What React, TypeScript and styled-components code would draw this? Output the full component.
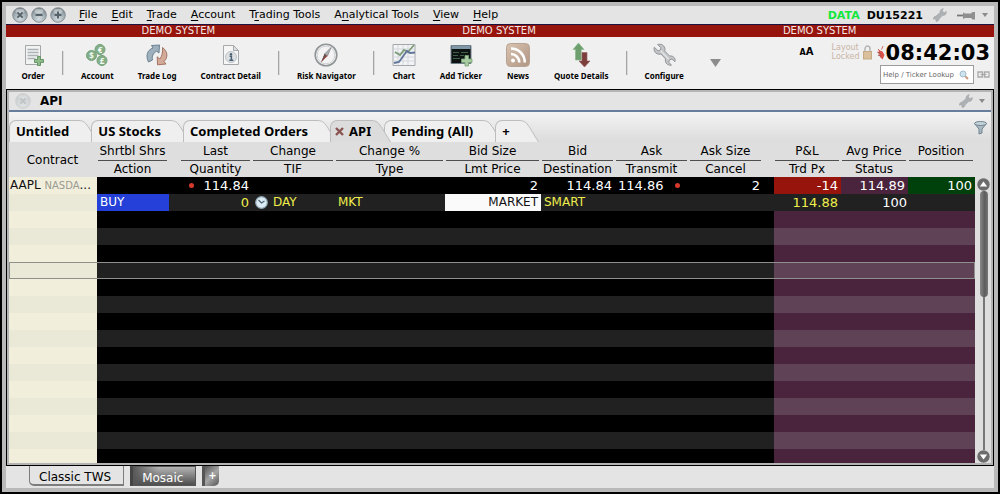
import React from "react";
import styled, { createGlobalStyle, css } from "styled-components";

const sans = '"DejaVu Sans", Verdana, sans-serif';
const humanist = '"Noto Sans", Tahoma, sans-serif';

const GlobalStyle = createGlobalStyle`
  * { box-sizing: border-box; }
  body { margin: 0; background: #000; font-family: ${sans}; color: #000; }
  button { margin: 0; padding: 0; border: 0; background: none; color: inherit; font: inherit; }
  svg { display: block; flex: none; }
`;

const Frame = styled.div`
  display: flex;
  flex-direction: column;
  height: 100vh;
  padding: 4px;
  border: 2px solid #000;
  background: #b9b9b9;
`;

const MenuBar = styled.header`
  display: flex;
  align-items: center;
  height: 19px;
  flex: none;
  padding: 0 6px;
  background: #e4e4e4;
  border-bottom: 1px solid #1c1440;
`;

const WindowButtons = styled.div`
  display: flex;
  gap: 3px;
  margin-right: 13px;
`;

const Menus = styled.nav`
  display: flex;
  gap: 14px;
  flex: 1;
`;

const MenuButton = styled.button`
  font-size: 11px;
  line-height: 16px;
  white-space: nowrap;
`;

const Mnemonic = styled.span`
  text-decoration: underline;
  text-underline-offset: 2px;
`;

const AccountStatus = styled.div`
  display: flex;
  align-items: center;
  gap: 7px;
  font-size: 11px;
  font-weight: bold;
`;

const DataFlag = styled.span`
  color: #12e83c;
`;

const StatusTools = styled.div`
  display: flex;
  align-items: center;
  gap: 6px;
  margin-left: 3px;
`;

const DemoBanner = styled.div`
  display: grid;
  grid-template-columns: repeat(3, 1fr);
  flex: none;
  padding: 0 14px 0 12px;
  background: #96140c;
  color: #f4e8e6;
  font-size: 10px;
  line-height: 12px;
  text-align: center;
`;

const Toolbar = styled.div`
  display: flex;
  height: 52px;
  flex: none;
  padding: 0 4px 0 3px;
  background: #f0f0f0;
`;

const ToolButton = styled.button`
  display: flex;
  flex-direction: column;
  align-items: center;
  gap: 3px;
  padding: 6px 12px 0;
  font-family: ${humanist};
  font-size: 8px;
  font-weight: bold;
  line-height: 12px;
  white-space: nowrap;
`;

const ToolSeparator = styled.span`
  width: 2px;
  height: 24px;
  margin: 14px 5px 0;
  border-right: 1px solid #dadada;
  background: #a4a4a4;
`;

const MoreButton = styled.button`
  padding: 0 14px;
`;

const ToolbarEnd = styled.div`
  display: flex;
  align-items: flex-start;
  margin-left: auto;
`;

const FontSizeButton = styled.button`
  margin: 9px 18px 0 0;
  font-size: 10px;
  font-weight: bold;
  line-height: 12px;
`;

const SmallLetter = styled.span`
  font-size: 8px;
`;

const LockButton = styled.button`
  display: flex;
  align-items: center;
  gap: 3px;
  margin: 6px 5px 0 0;
  color: #c9b5a5;
  font-size: 8px;
  line-height: 9px;
  text-align: left;
`;

const ClockColumn = styled.div`
  display: flex;
  flex-direction: column;
  align-items: flex-end;
`;

const ClockRow = styled.div`
  display: flex;
  align-items: center;
  gap: 1px;
  height: 28px;
  padding-top: 3px;
`;

const Clock = styled.time`
  font-size: 21px;
  font-weight: bold;
  line-height: 24px;
`;

const SearchRow = styled.div`
  display: flex;
  align-items: center;
  gap: 3px;
`;

const SearchBox = styled.label`
  display: flex;
  align-items: center;
  width: 94px;
  height: 19px;
  padding-right: 4px;
  background: #fff;
  border: 1px solid #9c9c9c;
`;

const SearchInput = styled.input`
  flex: 1;
  min-width: 0;
  padding: 0 0 0 2px;
  border: 0;
  outline: 0;
  background: none;
  font-family: ${sans};
  font-size: 7px;
  &::placeholder { color: #666; opacity: 1; }
`;

const Panel = styled.section`
  display: flex;
  flex-direction: column;
  flex: 1;
  min-height: 0;
  padding: 2px;
  border: 1px solid #000;
  background: #b4b4b4;
`;

const PanelTitle = styled.div`
  display: flex;
  align-items: center;
  height: 20px;
  flex: none;
  padding: 0 6px;
  background: #e4e4e4;
  border-bottom: 2px solid #667d9c;
`;

const PanelName = styled.h1`
  flex: 1;
  margin: 0 0 0 9px;
  font-size: 12px;
  line-height: 16px;
`;

const TabStrip = styled.div`
  display: flex;
  align-items: flex-end;
  justify-content: space-between;
  height: 30px;
  flex: none;
  background: linear-gradient(#f3f3f3, #dcdcdc);
`;

const TabList = styled.div`
  display: flex;
`;

const Tab = styled.button<{ $active?: boolean }>`
  position: relative;
  display: flex;
  margin-right: -7px;
  z-index: ${(p) => (p.$active ? 1 : 0)};
  color: ${(p) => (p.$active ? "#dcdcdc" : "#efefef")};
`;

const TabBody = styled.span<{ $tight?: boolean }>`
  display: flex;
  align-items: center;
  gap: 5px;
  height: 22px;
  padding: 0 ${(p) => (p.$tight ? 0 : 9)}px 1px ${(p) => (p.$tight ? 4 : 6)}px;
  background: currentColor;
  border: 1px solid #bdbdbd;
  border-width: 1px 0 0 1px;
  border-top-left-radius: 7px;
`;

const TabText = styled.span`
  color: #000;
  font-family: ${humanist};
  font-size: 13px;
  font-weight: bold;
  line-height: 18px;
  white-space: nowrap;
`;

const FilterButton = styled.button`
  align-self: center;
  padding: 2px 4px 0 0;
`;

const GridArea = styled.div`
  display: flex;
  flex: 1;
  min-height: 0;
  overflow: hidden;
  background: #dedede;
`;

const GridClip = styled.div`
  flex: 1;
  min-width: 0;
  overflow: hidden;
`;

const Grid = styled.table`
  width: 100%;
  table-layout: fixed;
  border-collapse: collapse;
`;

const HeadCell = styled.th`
  height: 35px;
  padding: 1px 2px 0 1px;
  font-size: 12px;
  font-weight: normal;
  line-height: 17px;
  white-space: nowrap;
`;

const HeadLine = styled.span<{ $ruled?: boolean }>`
  display: block;
  height: 16px;
  ${(p) => p.$ruled && css`
    height: 18px;
    border-bottom: 1px solid #4e4e4e;
  `}
`;

const Row = styled.tr<{ $focused?: boolean }>`
  height: 17px;
  ${(p) => p.$focused && css`
    outline: 1px solid #8f8f8b;
    outline-offset: -1px;
  `}
`;

type Zone = "contract" | "plain" | "account";
const zoneColors: Record<Zone, [string, string]> = {
  contract: ["#f1efdc", "#eae8d6"],
  plain: ["#000000", "#212121"],
  account: ["#4a243c", "#604256"],
};

const Cell = styled.td<{
  $zone: Zone;
  $odd: boolean;
  $fill?: string;
  $ink?: string;
  $align?: string;
  $flush?: boolean;
  $numeric?: boolean;
}>`
  height: 17px;
  padding: 0 ${(p) => (p.$flush ? 1 : 3)}px;
  background: ${(p) => p.$fill ?? zoneColors[p.$zone][p.$odd ? 1 : 0]};
  color: ${(p) => p.$ink ?? "#fff"};
  font-size: ${(p) => (p.$numeric ? 13 : 12)}px;
  line-height: 17px;
  text-align: ${(p) => p.$align ?? "left"};
  white-space: nowrap;
  overflow: hidden;
`;

const CellContent = styled.span`
  display: flex;
  align-items: center;
  justify-content: space-between;
`;

const WithIcon = styled.span`
  display: flex;
  align-items: center;
  gap: 5px;
`;

const Exchange = styled.span`
  color: #9b9a90;
  font-size: 10px;
  line-height: 12px;
`;

const TickDot = styled.span`
  width: 5px;
  height: 5px;
  margin: 0 6px;
  border-radius: 50%;
  background: #d63a2c;
`;

const ScrollBar = styled.div`
  display: flex;
  flex-direction: column;
  align-items: center;
  width: 16px;
  flex: none;
  padding: 36px 0 0 1px;
`;

const ScrollTrack = styled.div`
  flex: 1;
  width: 2px;
  display: flex;
  justify-content: center;
  background: #777;
`;

const ScrollThumb = styled.div`
  width: 8px;
  height: 41%;
  flex: none;
  border-radius: 4px;
  background: linear-gradient(90deg, #888, #5c5c5c 60%, #777);
`;

const BottomBar = styled.footer`
  display: flex;
  align-items: flex-start;
  gap: 6px;
  height: 22px;
  flex: none;
  padding-left: 23px;
  background: #e4e4e4;
`;

const LayoutTab = styled.button<{ $active?: boolean }>`
  height: 20px;
  padding: 2px 12px 0 9px;
  border: 1px solid #7c7c7c;
  border-top: 0;
  border-bottom-width: 2px;
  border-radius: 0 0 0 5px;
  font-size: 12px;
  line-height: 18px;
  ${(p) => !p.$active && css`
    border: 1px solid #555;
    border-left: 3px solid #444;
    border-radius: 0;
    background: linear-gradient(100deg, #555 0%, transparent 40%), linear-gradient(#b5b5b5, #4c4c4c);
    color: #fff;
  `}
`;

const AddLayoutTab = styled.button`
  width: 17px;
  height: 20px;
  border-left: 3px solid #555;
  border-radius: 0 0 5px 0;
  background: linear-gradient(135deg, #555, #a5a5a5 50%, #555);
  color: #fff;
  font-size: 10px;
  font-weight: bold;
  line-height: 18px;
`;

/* ---------- drawings ---------- */

const RoundButton = styled.button`
  display: block;
  border-radius: 50%;
`;

function WindowIcon({ kind, faded }: { kind: "x" | "-" | "+"; faded?: boolean }) {
  const id = "orb" + kind + (faded ? "f" : "");
  return (
    <svg width="16" height="16" viewBox="0 0 16 16" opacity={faded ? 0.25 : 1}>
      <defs>
        <radialGradient id={id} cx=".5" cy=".75" r=".7">
          <stop offset="0" stopColor="#d4dde1" />
          <stop offset=".7" stopColor="#9ba8ae" />
          <stop offset="1" stopColor="#6c787e" />
        </radialGradient>
      </defs>
      <circle cx="8" cy="8" r="7.3" fill={`url(#${id})`} stroke="#8a9297" strokeWidth="1" />
      <ellipse cx="8" cy="4" rx="4.6" ry="2.2" fill="#fff" opacity=".4" />
      <g stroke="#56636a" strokeWidth="2">
        {kind === "x" ? <path d="M5.4 5.4l5.2 5.2M10.6 5.4l-5.2 5.2" /> : <path d="M4.5 8h7" />}
        {kind === "+" && <path d="M8 4.5v7" />}
      </g>
    </svg>
  );
}

function Wrench() {
  return (
    <svg width="24" height="24" viewBox="0 0 24 24">
      <path
        d="M2.3 4.2L6 7.8l2.3-.6.6-2.4L5.6 1.5C8.8.6 12 2 12.8 5c.3 1.2.2 2-.1 3l4.8 5c1.8-.3 3.6.2 4.7 1.6 1 1.2 1.2 2.7.8 4.1L20 16l-2.6.8-.6 2.5 2.7 2.9c-2.9.6-5.7-1.2-6.1-4.1-.1-.9 0-1.5.2-2.1L9 11c-2.7.8-5.6-.4-6.6-3-.4-1.3-.5-2.6-.1-3.8z"
        fill="#c3c6c8"
        stroke="#93979a"
        strokeWidth="1"
      />
      <path d="M8.500 7.500l8.500 9" stroke="#e0e2e3" strokeWidth="1.600" />
    </svg>
  );
}

function SmallWrench() {
  return (
    <svg width="14" height="14" viewBox="0 0 14 14">
      <path
        d="M10.300.6L9.500 2.500l.4 1.600 1.600.3 1.900-1c.2 2-.8 3.800-2.600 4L9.700 7.600 6.100 11c-.2 1.700-1.500 2.700-3.100 2.500l-.1-1.900-1.200-.7-1.300.3c-.2-1.700.9-2.900 2.500-3.100l4-3.300C6.700 2.600 8.300.7 10.300.6z"
        fill="#adb1b3"
        stroke="#a0a4a6"
        strokeWidth=".5"
      />
    </svg>
  );
}

function Pin() {
  return (
    <svg width="19" height="11" viewBox="0 0 19 11">
      <path d="M0 5.500h7" stroke="#777" strokeWidth="1.800" />
      <path d="M6 2.500l2 1h6l1.500-1.500h2.500v7.500h-2.500L14 8H8L6 9z" fill="#8f8f8f" />
    </svg>
  );
}

function Caret({ w, h, color = "#8a8a8a" }: { w: number; h: number; color?: string }) {
  return (
    <svg width={w} height={h} viewBox="0 0 10 8" preserveAspectRatio="none">
      <path d="M0 0h10L5 8z" fill={color} />
    </svg>
  );
}

function OrderIcon() {
  return (
    <svg width="24" height="24" viewBox="0 0 24 24">
      <path d="M4.500 2.500h15v19h-15z" fill="#f1f2f2" stroke="#a3a7aa" />
      <path d="M6.500 6.500h11M6.500 9.500h11M6.500 12.500h11M6.500 15.500h8" stroke="#adb2b6" strokeWidth="1.500" />
      <path d="M16.500 13.500h3v3h3v3h-3v3h-3v-3h-3v-3h3z" fill="#8fbb8a" stroke="#5f9060" strokeWidth=".9" />
    </svg>
  );
}

function AccountIcon() {
  const coins: [number, number, string][] = [[15, 6.5, "€"], [6.5, 12.5, "$"], [17, 17.5, "£"]];
  return (
    <svg width="24" height="24" viewBox="0 0 24 24">
      {coins.map(([x, y, sign]) => (
        <g key={sign}>
          <circle cx={x} cy={y} r="5" fill="#83ae86" stroke="#74a07a" />
          <text x={x} y={y + 3} fill="#f2f8f2" fontSize="8" fontWeight="bold" textAnchor="middle">{sign}</text>
        </g>
      ))}
    </svg>
  );
}

function TradeLogIcon() {
  return (
    <svg width="24" height="24" viewBox="0 0 24 24">
      <path d="M3.500 19C.5 13 2 7 8 5L6.500 2.500l8-.5-.5 8-2.300-1.800C8 10 6.800 13.500 7.500 17z" fill="#9db0bc" stroke="#61788a" strokeWidth=".9" />
      <path d="M17.500 4.500c5 3.500 6 9.500 1.500 14l2 2.500-8.500.8-.3-8 2.600 2.200C17 13.500 18 9 17.500 4.500z" fill="#d3ab98" stroke="#9b6a58" strokeWidth=".9" />
    </svg>
  );
}

function ContractIcon() {
  return (
    <svg width="24" height="24" viewBox="0 0 24 24">
      <path d="M4.500 2.500h10l5 5v14h-15z" fill="#f6f6f6" stroke="#a5a9ac" />
      <path d="M14.500 2.500v5h5z" fill="#dde0e2" stroke="#a5a9ac" />
      <circle cx="12" cy="14" r="5.500" fill="#dde1e4" stroke="#bcc2c6" />
      <circle cx="12" cy="11.200" r="1.200" fill="#4b5f70" />
      <path d="M10.600 13.200H12.400v4M10.300 17.300h4" stroke="#4b5f70" strokeWidth="1.500" fill="none" />
    </svg>
  );
}

function CompassIcon() {
  return (
    <svg width="24" height="24" viewBox="0 0 24 24">
      <circle cx="12" cy="12" r="10.800" fill="#f3f3f3" stroke="#8f9496" strokeWidth="1.600" />
      <circle cx="12" cy="12" r="8.800" fill="none" stroke="#d0d2d3" />
      <path d="M17 4.500L13.500 13l-3-2z" fill="#a9aeb2" stroke="#777" strokeWidth=".6" />
      <path d="M7 19.500l6.500-6.500-3-2z" fill="#9c4440" />
      <path d="M7 19.500l3.500-8.500 1.500 1z" fill="#555" />
    </svg>
  );
}

function ChartIcon() {
  return (
    <svg width="24" height="24" viewBox="0 0 24 24">
      <path d="M1 1.500h22v21H1z" fill="#f2f3f5" stroke="#a4a7aa" />
      <path d="M1 6h22M1 10h22M1 14h22M1 18h22M6 2v20M11 2v20M16 2v20" stroke="#cdd0d6" strokeWidth=".8" />
      <path d="M3 9l5 3 4-5 4 2 6-7" stroke="#7d9c78" strokeWidth="1.800" fill="none" />
      <path d="M2 20l5-1 5-7 3-4 3 2 5-.5" stroke="#61749a" strokeWidth="1.800" fill="none" />
    </svg>
  );
}

function TickerIcon() {
  return (
    <svg width="24" height="24" viewBox="0 0 24 24">
      <path d="M2 2.500h20v18H2z" fill="#0d1412" stroke="#70808a" />
      <path d="M2.500 3h19v3h-19z" fill="#8196a6" />
      <path d="M4 9.500h6M12 9.500h7M4 12.500h5M11 12.500h4M4 15.500h7" stroke="#3f5f4c" strokeWidth="1.200" />
      <path d="M16 12.500h3.500v3.500h3.500v3.500h-3.500V23H16v-3.500h-3.500V16H16z" fill="#a9cba2" stroke="#7aa376" strokeWidth=".8" />
    </svg>
  );
}

function NewsIcon() {
  return (
    <svg width="24" height="24" viewBox="0 0 24 24">
      <defs>
        <linearGradient id="news" x1="0" y1="0" x2="1" y2="1">
          <stop offset="0" stopColor="#d9c3b1" />
          <stop offset="1" stopColor="#b09684" />
        </linearGradient>
      </defs>
      <rect x=".5" y=".5" width="23" height="23" rx="4" fill="url(#news)" stroke="#b8a393" />
      <circle cx="7" cy="17.500" r="2" fill="#fff" />
      <path d="M5 11c4.500 0 8.300 3.800 8.300 8.500M5 5.500c7.500 0 13.800 6 13.800 14" fill="none" stroke="#fff" strokeWidth="2.600" />
    </svg>
  );
}

function QuoteIcon() {
  return (
    <svg width="24" height="24" viewBox="0 0 24 24">
      <path d="M9.500 0L15 6.500h-2.800V17H6.500V6.500H4z" fill="#6da06e" stroke="#86b487" strokeWidth=".6" />
      <path d="M13 9.500h5V18h3l-5.500 6-5.500-6h3z" fill="#7c3f3c" stroke="#955d5a" strokeWidth=".6" />
    </svg>
  );
}

function LockIcon() {
  return (
    <svg width="9" height="15" viewBox="0 0 9 15">
      <path d="M2 7V4a2.500 3 0 0 1 5 0v3" fill="none" stroke="#b5b5b5" strokeWidth="1.500" />
      <rect x=".5" y="6.500" width="8" height="7.500" fill="#d9bf9c" stroke="#c4a985" />
    </svg>
  );
}

function ConnectionIcon() {
  return (
    <svg width="8" height="14" viewBox="0 0 8 14">
      <path d="M6 0L4.500 3.500M1 3l2 2" stroke="#d06a60" />
      <path d="M1.500 4l4 1.500L7.500 9 5.500 13.500 3 11z" fill="#d8524a" />
      <path d="M.5 6l3 2M1 9l3 1" stroke="#b05048" strokeWidth="1.200" />
    </svg>
  );
}

function Magnifier() {
  return (
    <svg width="10" height="10" viewBox="0 0 10 10">
      <path d="M6 6l3 3" stroke="#c89a7a" strokeWidth="1.800" />
      <circle cx="4" cy="4" r="3" fill="#cfe3ee" stroke="#a3bccb" />
    </svg>
  );
}

function LinkIcon() {
  return (
    <svg width="13" height="7" viewBox="0 0 13 7">
      <path d="M1 1h4.500v5H1zM7.500 1H12v5H7.500z" fill="none" stroke="#aaa" strokeWidth="1.300" />
      <path d="M3.500 3.500h6" stroke="#aaa" strokeWidth="1.300" />
    </svg>
  );
}

function TabCap() {
  return (
    <svg width="20" height="22" viewBox="0 0 20 22">
      <path d="M0 .5C7 .5 8 4 11 8L19.500 22H0z" fill="currentColor" />
      <path d="M0 .5C7 .5 8 4 11 8L19.500 22" fill="none" stroke="#bdbdbd" />
    </svg>
  );
}

function CloseMark() {
  return (
    <svg width="9" height="9" viewBox="0 0 9 9">
      <path d="M1 1l7 7M8 1L1 8" stroke="#8a5450" strokeWidth="2.400" />
    </svg>
  );
}

function FilterIcon() {
  return (
    <svg width="13" height="14" viewBox="0 0 13 14">
      <path d="M.5 2.500L5 8v5l3-1V8l4.500-5.500z" fill="#a9bac4" stroke="#70828d" />
      <ellipse cx="6.500" cy="2.500" rx="6" ry="2" fill="#c3d2da" stroke="#70828d" />
    </svg>
  );
}

function ClockFace() {
  return (
    <svg width="13" height="13" viewBox="0 0 13 13">
      <circle cx="6.500" cy="6.500" r="5.800" fill="#dcecf4" stroke="#8fa6b3" strokeWidth="1.200" />
      <path d="M3.500 4l3 3 3-2" fill="none" stroke="#4c6474" strokeWidth="1.300" />
    </svg>
  );
}

function ScrollArrow({ up }: { up?: boolean }) {
  return (
    <svg width="13" height="13" viewBox="0 0 13 13">
      <circle cx="6.500" cy="6.500" r="6.200" fill="#6c6c6c" />
      <path d={up ? "M2.800 8.500L6.500 3.500l3.700 5z" : "M2.800 4.500L6.500 9.500l3.700-5z"} fill="#fff" />
    </svg>
  );
}

/* ---------- data ---------- */

const menus: [string, string, string][] = [
  ["", "F", "ile"],
  ["", "E", "dit"],
  ["", "T", "rade"],
  ["", "A", "ccount"],
  ["T", "r", "ading Tools"],
  ["A", "n", "alytical Tools"],
  ["", "V", "iew"],
  ["", "H", "elp"],
];

const tools: ([string, React.ReactNode] | null)[] = [
  ["Order", <OrderIcon />],
  null,
  ["Account", <AccountIcon />],
  ["Trade Log", <TradeLogIcon />],
  ["Contract Detail", <ContractIcon />],
  null,
  ["Risk Navigator", <CompassIcon />],
  null,
  ["Chart", <ChartIcon />],
  ["Add Ticker", <TickerIcon />],
  ["News", <NewsIcon />],
  ["Quote Details", <QuoteIcon />],
  null,
  ["Configure", <Wrench />],
];

const tabs = ["Untitled", "US Stocks", "Completed Orders", "API", "Pending (All)", "+"];

interface Column {
  width: number;
  zone: Zone;
  head?: [string, string];
}

const columns: Column[] = [
  { width: 88, zone: "contract" },
  { width: 72, zone: "plain", head: ["Shrtbl Shrs", "Action"] },
  { width: 11, zone: "plain" },
  { width: 72, zone: "plain", head: ["Last", "Quantity"] },
  { width: 83, zone: "plain", head: ["Change", "TIF"] },
  { width: 110, zone: "plain", head: ["Change %", "Type"] },
  { width: 96, zone: "plain", head: ["Bid Size", "Lmt Price"] },
  { width: 74, zone: "plain", head: ["Bid", "Destination"] },
  { width: 74, zone: "plain", head: ["Ask", "Transmit"] },
  { width: 74, zone: "plain", head: ["Ask Size", "Cancel"] },
  { width: 11, zone: "plain" },
  { width: 67, zone: "account", head: ["P&L", "Trd Px"] },
  { width: 67, zone: "account", head: ["Avg Price", "Status"] },
  { width: 67, zone: "account", head: ["Position", ""] },
];

interface CellData {
  value: React.ReactNode;
  fill?: string;
  ink?: string;
  align?: string;
  flush?: boolean;
  numeric?: boolean;
}

const yellow = "#f0ee4c";
const num = (value: React.ReactNode, more: Partial<CellData> = {}): CellData => ({
  value,
  align: "right",
  numeric: true,
  ...more,
});

const rows: Record<number, CellData>[] = [
  {
    0: { value: <>AAPL <Exchange>NASDA</Exchange>...</>, ink: "#111", flush: true },
    3: num(<CellContent><TickDot />114.84</CellContent>),
    6: num("2"),
    7: num("114.84"),
    8: num(<CellContent>114.86<TickDot /></CellContent>),
    9: num("2"),
    11: num("-14", { fill: "#96140c" }),
    12: num("114.89"),
    13: num("100", { fill: "#00400a" }),
  },
  {
    1: { value: "BUY", fill: "#2440d8" },
    3: num("0", { ink: yellow }),
    4: { value: <WithIcon><ClockFace />DAY</WithIcon>, ink: yellow },
    5: { value: "MKT", ink: yellow },
    6: { value: "MARKET", fill: "#fafafa", ink: "#111", align: "right" },
    7: { value: "SMART", ink: yellow },
    11: num("114.88", { fill: "#212121", ink: yellow }),
    12: num("100", { fill: "#212121", flush: true }),
    13: { value: "", fill: "#212121" },
  },
  ...Array.from({ length: 15 }, () => ({})),
];

const focusedRow = 5;

export default function App() {
  return (
    <Frame>
      <GlobalStyle />
      <MenuBar>
        <WindowButtons>
          <RoundButton aria-label="Close"><WindowIcon kind="x" /></RoundButton>
          <RoundButton aria-label="Minimize"><WindowIcon kind="-" /></RoundButton>
          <RoundButton aria-label="Maximize"><WindowIcon kind="+" /></RoundButton>
        </WindowButtons>
        <Menus>
          {menus.map(([before, key, after]) => (
            <MenuButton key={key + after}>{before}<Mnemonic>{key}</Mnemonic>{after}</MenuButton>
          ))}
        </Menus>
        <AccountStatus>
          <DataFlag>DATA</DataFlag>
          <span>DU15221</span>
          <StatusTools>
            <button aria-label="Settings"><SmallWrench /></button>
          </StatusTools>
          <StatusTools>
            <button aria-label="Pin window"><Pin /></button>
            <button aria-label="Pin options"><Caret w={6} h={4} /></button>
          </StatusTools>
        </AccountStatus>
      </MenuBar>

      <DemoBanner>
        <span>DEMO SYSTEM</span>
        <span>DEMO SYSTEM</span>
        <span>DEMO SYSTEM</span>
      </DemoBanner>

      <Toolbar>
        {tools.map((tool, i) =>
          tool ? (
            <ToolButton key={i}>{tool[1]}<span>{tool[0]}</span></ToolButton>
          ) : (
            <ToolSeparator key={i} />
          )
        )}
        <MoreButton aria-label="More tools"><Caret w={11} h={8} color="#8c8c8c" /></MoreButton>
        <ToolbarEnd>
          <FontSizeButton aria-label="Font size"><SmallLetter>A</SmallLetter>A</FontSizeButton>
          <LockButton><span>Layout<br />Locked</span><LockIcon /></LockButton>
          <ClockColumn>
            <ClockRow><ConnectionIcon /><Clock>08:42:03</Clock></ClockRow>
            <SearchRow>
              <SearchBox>
                <SearchInput aria-label="Help / Ticker Lookup" placeholder="Help / Ticker Lookup" />
                <Magnifier />
              </SearchBox>
              <LinkIcon />
            </SearchRow>
          </ClockColumn>
        </ToolbarEnd>
      </Toolbar>

      <Panel>
        <PanelTitle>
          <RoundButton aria-label="Close panel"><WindowIcon kind="x" faded /></RoundButton>
          <PanelName>API</PanelName>
          <StatusTools>
            <button aria-label="Panel settings"><SmallWrench /></button>
            <button aria-label="Panel options"><Caret w={6} h={4} /></button>
          </StatusTools>
        </PanelTitle>

        <TabStrip>
          <TabList role="tablist">
            {tabs.map((name) => (
              <Tab key={name} role="tab" $active={name === "API"} aria-selected={name === "API"}>
                <TabBody $tight={name === "API"}>
                  {name === "API" && <CloseMark />}
                  <TabText>{name}</TabText>
                </TabBody>
                <TabCap />
              </Tab>
            ))}
          </TabList>
          <FilterButton aria-label="Filter"><FilterIcon /></FilterButton>
        </TabStrip>

        <GridArea>
          <GridClip>
            <Grid>
              <colgroup>
                {columns.map((c, i) => <col key={i} width={c.width} />)}
              </colgroup>
              <thead>
                <tr>
                  {columns.map((c, i) => (
                    <HeadCell key={i} scope="col">
                      {i === 0 ? "Contract" : c.head && (
                        <>
                          <HeadLine $ruled>{c.head[0]}</HeadLine>
                          <HeadLine>{c.head[1]}</HeadLine>
                        </>
                      )}
                    </HeadCell>
                  ))}
                </tr>
              </thead>
              <tbody>
                {rows.map((row, r) => (
                  <Row key={r} $focused={r === focusedRow}>
                    {columns.map((c, i) => {
                      const cell = row[i];
                      return (
                        <Cell
                          key={i}
                          $zone={c.zone}
                          $odd={r % 2 === 1}
                          $fill={cell?.fill}
                          $ink={cell?.ink}
                          $align={cell?.align}
                          $flush={cell?.flush}
                          $numeric={cell?.numeric}
                        >
                          {cell?.value}
                        </Cell>
                      );
                    })}
                  </Row>
                ))}
              </tbody>
            </Grid>
          </GridClip>
          <ScrollBar>
            <button aria-label="Scroll up"><ScrollArrow up /></button>
            <ScrollTrack><ScrollThumb /></ScrollTrack>
            <button aria-label="Scroll down"><ScrollArrow /></button>
          </ScrollBar>
        </GridArea>
      </Panel>

      <BottomBar>
        <LayoutTab $active>Classic TWS</LayoutTab>
        <LayoutTab>Mosaic</LayoutTab>
        <AddLayoutTab aria-label="Add layout">+</AddLayoutTab>
      </BottomBar>
    </Frame>
  );
}
